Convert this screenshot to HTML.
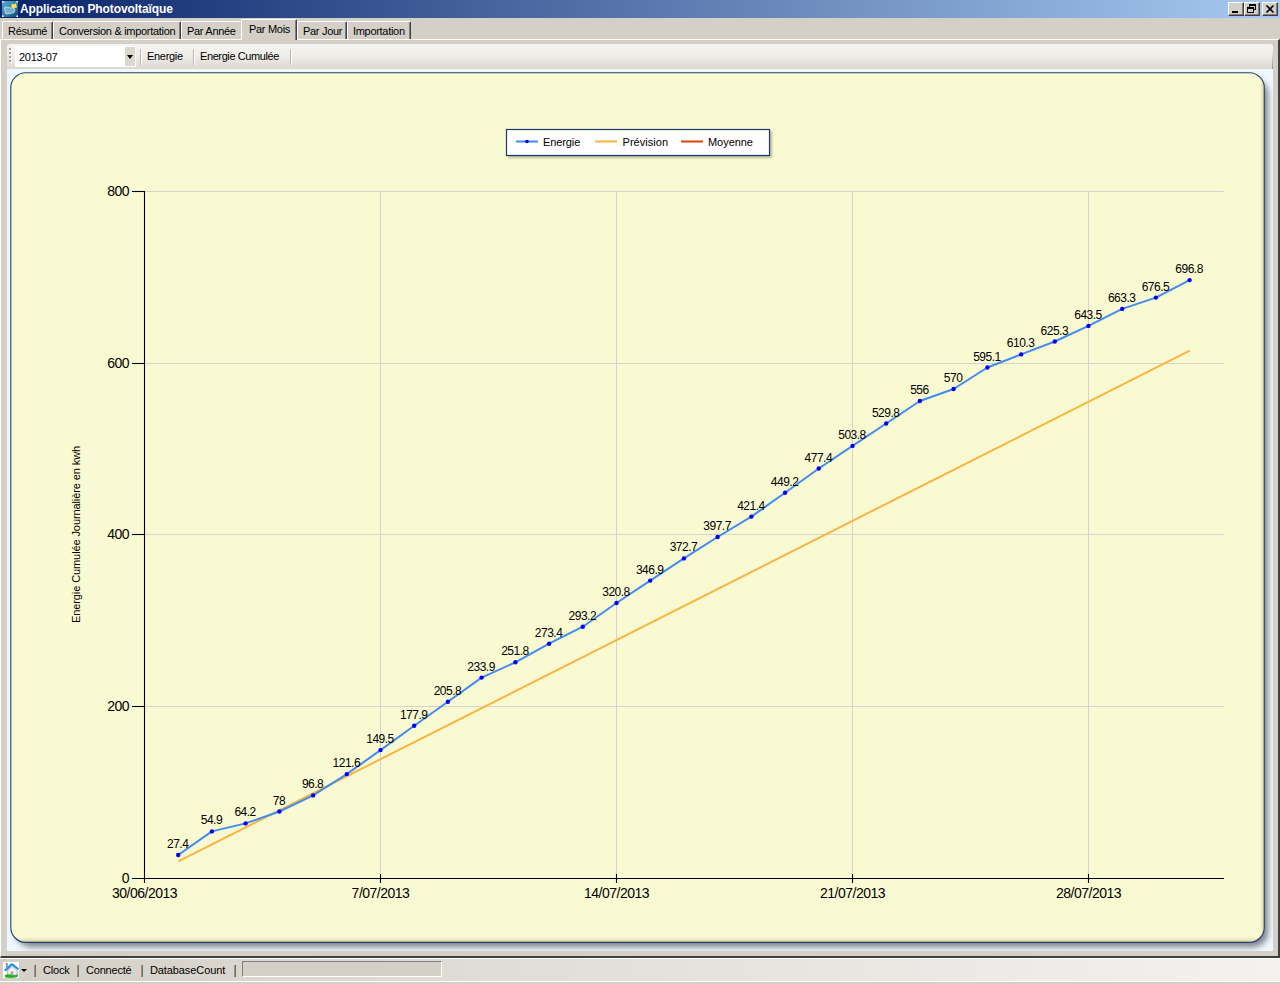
<!DOCTYPE html>
<html><head><meta charset="utf-8">
<style>
*{margin:0;padding:0;box-sizing:border-box}
html,body{width:1280px;height:984px;overflow:hidden;background:#d4d0c8;font-family:"Liberation Sans", sans-serif;font-size:11px;color:#000}
.abs{position:absolute}
#title{left:0;top:0;width:1280px;height:18px;background:linear-gradient(to right,#0a246a 0%,#a6caf0 100%)}
#title .t{position:absolute;left:20px;top:2px;color:#fff;font:bold 12px "Liberation Sans", sans-serif;letter-spacing:-0.1px}
.wbtn{position:absolute;top:2px;width:16px;height:14px;background:#d4d0c8;border-top:1px solid #fff;border-left:1px solid #fff;border-right:1px solid #404040;border-bottom:1px solid #404040;box-shadow:inset -1px -1px 0 #808080}
.tab{position:absolute;top:21px;height:18px;border-top:1px solid #fff;border-left:1px solid #fff;border-right:1px solid #404040;box-shadow:inset -1px 0 0 #808080;border-radius:2px 2px 0 0;padding-left:5px;line-height:19px;white-space:nowrap;letter-spacing:-0.3px}
.tab.sel{top:19px;height:21px;background:#d4d0c8;z-index:3;line-height:19px}
#page{left:0;top:39px;width:1280px;height:919px;border-top:1px solid #fff;border-left:1px solid #fff;border-right:2px solid #404040;border-bottom:2px solid #404040}
#toolbar{left:7px;top:44px;width:1266px;height:25px;border-radius:3px 3px 0 0;background:linear-gradient(to bottom,#f6f5f3 0%,#eeece8 50%,#dcd8d0 100%);}
#combo{left:15px;top:46px;width:121px;height:21px;background:#fff}
#combo .t{position:absolute;left:4px;top:5px;letter-spacing:-0.3px}
#combo .b{position:absolute;right:1px;top:1px;width:10px;height:19px;background:#dcd8d0}
.tsep{position:absolute;top:5px;width:1px;height:16px;background:#b8b4ac;box-shadow:1px 0 0 #fff}
#status{left:0;top:958px;width:1280px;height:26px;background:linear-gradient(to right,#d4d0c8 0%,#f3f2ef 100%);border-top:1px solid #fff}
.sep{position:absolute;top:965px;width:2px;height:12px;background:linear-gradient(to right,#d08a30 0%,#d08a30 50%,#3a78b8 50%,#3a78b8 100%)}
.st{position:absolute;top:964px;letter-spacing:-0.2px}
</style></head><body>
<div id="title" class="abs">
  <svg class="abs" style="left:2px;top:1px" width="16" height="16" viewBox="0 0 16 16">
    <defs><linearGradient id="ig" x1="0" y1="0" x2="1" y2="1"><stop offset="0" stop-color="#5fb2cc"/><stop offset="0.5" stop-color="#2f82a8"/><stop offset="1" stop-color="#0d4670"/></linearGradient></defs>
    <rect x="0" y="0" width="16" height="16" fill="url(#ig)"/>
    <path d="M2.5 6.5 L6 6 L8 7 L11 6.5 L13 9 L12 11.5 L8 12.5 L4 13 L3 10 Z" fill="#6fb0d4" stroke="#d0dce4" stroke-width="0.9"/>
    <path d="M9 4.5 L10.5 2.5 L12 3.5 L14 2 L14.5 4.5 L15 6.5 L13 7 L11.5 8 L10.5 6.5 Z" fill="#f4e44a"/>
    <circle cx="0.8" cy="0.8" r="0.9" fill="#fff"/><circle cx="15.2" cy="0.8" r="0.9" fill="#fff"/><circle cx="0.8" cy="15.2" r="0.9" fill="#fff"/><circle cx="15.2" cy="15.2" r="0.9" fill="#fff"/>
  </svg>
  <div class="t">Application Photovoltaïque</div>
  <div class="wbtn" style="left:1228px"><div class="abs" style="left:3px;top:8px;width:6px;height:2px;background:#000"></div></div>
  <div class="wbtn" style="left:1244px">
    <div class="abs" style="left:4px;top:1px;width:7px;height:6px;border:1px solid #000;border-top-width:2px"></div>
    <div class="abs" style="left:2px;top:4px;width:7px;height:6px;border:1px solid #000;border-top-width:2px;background:#d4d0c8"></div>
  </div>
  <div class="wbtn" style="left:1262px"><svg class="abs" style="left:0;top:0" width="14" height="12"><path d="M3.5 2.5 L10.5 9.5 M10.5 2.5 L3.5 9.5" stroke="#000" stroke-width="1.7"/></svg></div>
</div>
<div class="tab" style="left:2px;width:51px">Résumé</div>
<div class="tab" style="left:53px;width:128px">Conversion &amp; importation</div>
<div class="tab" style="left:181px;width:60px;border-right:none;box-shadow:none">Par Année</div>
<div class="tab sel" style="left:241px;width:56px;padding-left:7px">Par Mois</div>
<div class="tab" style="left:297px;width:50px">Par Jour</div>
<div class="tab" style="left:347px;width:64px">Importation</div>
<div id="page" class="abs"></div>
<div id="toolbar" class="abs">
  <div class="abs" style="left:2px;top:4px;width:2px;height:2px;background:#a0a0a0;box-shadow:0 4px 0 #a0a0a0,0 8px 0 #a0a0a0,0 12px 0 #a0a0a0,1px 1px 0 #fff,1px 5px 0 #fff,1px 9px 0 #fff,1px 13px 0 #fff"></div>
  <div class="tsep" style="left:133px"></div>
  <div class="abs" style="left:140px;top:6px;letter-spacing:-0.3px">Energie</div>
  <div class="tsep" style="left:186px"></div>
  <div class="abs" style="left:193px;top:6px;letter-spacing:-0.4px">Energie Cumulée</div>
  <div class="tsep" style="left:283px"></div>
  <div class="abs" style="left:1265px;top:8px;width:1px;height:17px;background:linear-gradient(to bottom,rgba(150,146,138,0) 0%,#9c988f 100%)"></div>
</div>
<div id="combo" class="abs"><div class="t">2013-07</div><div class="b"><div class="abs" style="left:2px;top:8px;width:0;height:0;border-left:3.5px solid transparent;border-right:3.5px solid transparent;border-top:4px solid #000"></div></div></div>
<svg class="abs" style="left:0;top:0" width="1280" height="984" font-family='"Liberation Sans", sans-serif' fill="#000">
<defs>
<filter id="sh" x="-5%" y="-5%" width="110%" height="110%"><feGaussianBlur stdDeviation="3.2"/></filter>
<linearGradient id="embB" x1="0" y1="0" x2="0" y2="1"><stop offset="0" stop-color="#FAFAD2" stop-opacity="0"/><stop offset="1" stop-color="#a09868" stop-opacity="0.7"/></linearGradient>
<linearGradient id="embR" x1="0" y1="0" x2="1" y2="0"><stop offset="0" stop-color="#FAFAD2" stop-opacity="0"/><stop offset="1" stop-color="#a09868" stop-opacity="0.75"/></linearGradient>
<clipPath id="pc"><rect x="7" y="69" width="1266" height="882"/></clipPath><clipPath id="fc"><rect x="11" y="73" width="1253" height="869" rx="15" ry="15"/></clipPath>
<filter id="sh3" x="-10%" y="-50%" width="120%" height="200%"><feGaussianBlur stdDeviation="1"/></filter></defs>
<rect x="7" y="69" width="1266" height="882" fill="#F0F8FF"/>
<g clip-path="url(#pc)"><rect x="16" y="79" width="1252" height="868" rx="15" ry="15" fill="#7c8089" opacity="1" filter="url(#sh)"/></g>
<rect x="10.8" y="72.8" width="1253.5" height="869.6" rx="15" ry="15" fill="#FAFAD2"/>
<g clip-path="url(#fc)"><rect x="0" y="936" width="1280" height="7" fill="url(#embB)"/><rect x="1259" y="60" width="6" height="900" fill="url(#embR)"/></g>
<rect x="10.8" y="72.8" width="1253.5" height="869.6" rx="15" ry="15" fill="none" stroke="#24436f" stroke-width="1.1"/>
<rect x="508" y="131" width="264" height="27" fill="#000" opacity="0.25" filter="url(#sh3)"/>
<rect x="506.5" y="129.5" width="263" height="26" fill="#fff" stroke="#1A3B69" stroke-width="1.2"/>
<line x1="516" y1="141.5" x2="538" y2="141.5" stroke="#418CF0" stroke-width="2"/>
<circle cx="527" cy="141.5" r="1.8" fill="#0000FF"/>
<line x1="595" y1="141.5" x2="617" y2="141.5" stroke="#FCB441" stroke-width="2"/>
<line x1="681" y1="141.5" x2="703" y2="141.5" stroke="#E0400A" stroke-width="2"/>
<text x="543" y="146" font-size="11" letter-spacing="-0.1">Energie</text>
<text x="622.5" y="146" font-size="11" letter-spacing="0.05">Prévision</text>
<text x="708" y="146" font-size="11" letter-spacing="-0.05">Moyenne</text>
<line x1="380.5" y1="191" x2="380.5" y2="878" stroke="#d3d3d3" stroke-width="1"/>
<line x1="616.5" y1="191" x2="616.5" y2="878" stroke="#d3d3d3" stroke-width="1"/>
<line x1="852.5" y1="191" x2="852.5" y2="878" stroke="#d3d3d3" stroke-width="1"/>
<line x1="1088.5" y1="191" x2="1088.5" y2="878" stroke="#d3d3d3" stroke-width="1"/>
<line x1="144" y1="191.5" x2="1224" y2="191.5" stroke="#d3d3d3" stroke-width="1"/>
<line x1="144" y1="363.5" x2="1224" y2="363.5" stroke="#d3d3d3" stroke-width="1"/>
<line x1="144" y1="534.5" x2="1224" y2="534.5" stroke="#d3d3d3" stroke-width="1"/>
<line x1="144" y1="706.5" x2="1224" y2="706.5" stroke="#d3d3d3" stroke-width="1"/>
<line x1="144.5" y1="191" x2="144.5" y2="883" stroke="#000" stroke-width="1.1"/>
<line x1="132" y1="878.5" x2="1224" y2="878.5" stroke="#000" stroke-width="1.1"/>
<line x1="132" y1="191.5" x2="144" y2="191.5" stroke="#000" stroke-width="1.1"/>
<line x1="132" y1="363.5" x2="144" y2="363.5" stroke="#000" stroke-width="1.1"/>
<line x1="132" y1="534.5" x2="144" y2="534.5" stroke="#000" stroke-width="1.1"/>
<line x1="132" y1="706.5" x2="144" y2="706.5" stroke="#000" stroke-width="1.1"/>
<line x1="380.5" y1="874" x2="380.5" y2="883" stroke="#000" stroke-width="1.1"/>
<line x1="616.5" y1="874" x2="616.5" y2="883" stroke="#000" stroke-width="1.1"/>
<line x1="852.5" y1="874" x2="852.5" y2="883" stroke="#000" stroke-width="1.1"/>
<line x1="1088.5" y1="874" x2="1088.5" y2="883" stroke="#000" stroke-width="1.1"/>
<text x="129" y="196.0" text-anchor="end" font-size="14" letter-spacing="-0.5">800</text>
<text x="129" y="368.0" text-anchor="end" font-size="14" letter-spacing="-0.5">600</text>
<text x="129" y="539.0" text-anchor="end" font-size="14" letter-spacing="-0.5">400</text>
<text x="129" y="711.0" text-anchor="end" font-size="14" letter-spacing="-0.5">200</text>
<text x="129" y="883.0" text-anchor="end" font-size="14" letter-spacing="-0.5">0</text>
<text x="144.5" y="898" text-anchor="middle" font-size="14" letter-spacing="-0.5">30/06/2013</text>
<text x="380.5" y="898" text-anchor="middle" font-size="14" letter-spacing="-0.5">7/07/2013</text>
<text x="616.5" y="898" text-anchor="middle" font-size="14" letter-spacing="-0.5">14/07/2013</text>
<text x="852.5" y="898" text-anchor="middle" font-size="14" letter-spacing="-0.5">21/07/2013</text>
<text x="1088.5" y="898" text-anchor="middle" font-size="14" letter-spacing="-0.5">28/07/2013</text>
<text transform="translate(80,534.5) rotate(-90)" text-anchor="middle" font-size="11" letter-spacing="-0.1">Energie Cumulée Journalière en kwh</text>
<line x1="178.3" y1="861.3" x2="1189.7" y2="350.6" stroke="#FCB441" stroke-width="2"/>
<polyline points="178.2,855.0 211.9,831.4 245.6,823.4 279.4,811.5 313.1,795.4 346.8,774.1 380.5,750.1 414.2,725.7 447.9,701.8 481.6,677.6 515.4,662.3 549.1,643.7 582.8,626.7 616.5,603.0 650.2,580.6 683.9,558.4 717.6,537.0 751.4,516.6 785.1,492.7 818.8,468.5 852.5,445.9 886.2,423.5 919.9,401.0 953.6,389.0 987.4,367.5 1021.1,354.4 1054.8,341.5 1088.5,325.9 1122.2,308.9 1155.9,297.6 1189.6,280.1" fill="none" stroke="#418CF0" stroke-width="2" stroke-linejoin="round"/>
<circle cx="178.2" cy="855.0" r="2.2" fill="#0000FF"/>
<circle cx="211.9" cy="831.4" r="2.2" fill="#0000FF"/>
<circle cx="245.6" cy="823.4" r="2.2" fill="#0000FF"/>
<circle cx="279.4" cy="811.5" r="2.2" fill="#0000FF"/>
<circle cx="313.1" cy="795.4" r="2.2" fill="#0000FF"/>
<circle cx="346.8" cy="774.1" r="2.2" fill="#0000FF"/>
<circle cx="380.5" cy="750.1" r="2.2" fill="#0000FF"/>
<circle cx="414.2" cy="725.7" r="2.2" fill="#0000FF"/>
<circle cx="447.9" cy="701.8" r="2.2" fill="#0000FF"/>
<circle cx="481.6" cy="677.6" r="2.2" fill="#0000FF"/>
<circle cx="515.4" cy="662.3" r="2.2" fill="#0000FF"/>
<circle cx="549.1" cy="643.7" r="2.2" fill="#0000FF"/>
<circle cx="582.8" cy="626.7" r="2.2" fill="#0000FF"/>
<circle cx="616.5" cy="603.0" r="2.2" fill="#0000FF"/>
<circle cx="650.2" cy="580.6" r="2.2" fill="#0000FF"/>
<circle cx="683.9" cy="558.4" r="2.2" fill="#0000FF"/>
<circle cx="717.6" cy="537.0" r="2.2" fill="#0000FF"/>
<circle cx="751.4" cy="516.6" r="2.2" fill="#0000FF"/>
<circle cx="785.1" cy="492.7" r="2.2" fill="#0000FF"/>
<circle cx="818.8" cy="468.5" r="2.2" fill="#0000FF"/>
<circle cx="852.5" cy="445.9" r="2.2" fill="#0000FF"/>
<circle cx="886.2" cy="423.5" r="2.2" fill="#0000FF"/>
<circle cx="919.9" cy="401.0" r="2.2" fill="#0000FF"/>
<circle cx="953.6" cy="389.0" r="2.2" fill="#0000FF"/>
<circle cx="987.4" cy="367.5" r="2.2" fill="#0000FF"/>
<circle cx="1021.1" cy="354.4" r="2.2" fill="#0000FF"/>
<circle cx="1054.8" cy="341.5" r="2.2" fill="#0000FF"/>
<circle cx="1088.5" cy="325.9" r="2.2" fill="#0000FF"/>
<circle cx="1122.2" cy="308.9" r="2.2" fill="#0000FF"/>
<circle cx="1155.9" cy="297.6" r="2.2" fill="#0000FF"/>
<circle cx="1189.6" cy="280.1" r="2.2" fill="#0000FF"/>
<text x="177.7" y="848.0" text-anchor="middle" font-size="12" letter-spacing="-0.5">27.4</text>
<text x="211.4" y="824.4" text-anchor="middle" font-size="12" letter-spacing="-0.5">54.9</text>
<text x="245.1" y="816.4" text-anchor="middle" font-size="12" letter-spacing="-0.5">64.2</text>
<text x="278.9" y="804.5" text-anchor="middle" font-size="12" letter-spacing="-0.5">78</text>
<text x="312.6" y="788.4" text-anchor="middle" font-size="12" letter-spacing="-0.5">96.8</text>
<text x="346.3" y="767.1" text-anchor="middle" font-size="12" letter-spacing="-0.5">121.6</text>
<text x="380.0" y="743.1" text-anchor="middle" font-size="12" letter-spacing="-0.5">149.5</text>
<text x="413.7" y="718.7" text-anchor="middle" font-size="12" letter-spacing="-0.5">177.9</text>
<text x="447.4" y="694.8" text-anchor="middle" font-size="12" letter-spacing="-0.5">205.8</text>
<text x="481.1" y="670.6" text-anchor="middle" font-size="12" letter-spacing="-0.5">233.9</text>
<text x="514.9" y="655.3" text-anchor="middle" font-size="12" letter-spacing="-0.5">251.8</text>
<text x="548.6" y="636.7" text-anchor="middle" font-size="12" letter-spacing="-0.5">273.4</text>
<text x="582.3" y="619.7" text-anchor="middle" font-size="12" letter-spacing="-0.5">293.2</text>
<text x="616.0" y="596.0" text-anchor="middle" font-size="12" letter-spacing="-0.5">320.8</text>
<text x="649.7" y="573.6" text-anchor="middle" font-size="12" letter-spacing="-0.5">346.9</text>
<text x="683.4" y="551.4" text-anchor="middle" font-size="12" letter-spacing="-0.5">372.7</text>
<text x="717.1" y="530.0" text-anchor="middle" font-size="12" letter-spacing="-0.5">397.7</text>
<text x="750.9" y="509.6" text-anchor="middle" font-size="12" letter-spacing="-0.5">421.4</text>
<text x="784.6" y="485.7" text-anchor="middle" font-size="12" letter-spacing="-0.5">449.2</text>
<text x="818.3" y="461.5" text-anchor="middle" font-size="12" letter-spacing="-0.5">477.4</text>
<text x="852.0" y="438.9" text-anchor="middle" font-size="12" letter-spacing="-0.5">503.8</text>
<text x="885.7" y="416.5" text-anchor="middle" font-size="12" letter-spacing="-0.5">529.8</text>
<text x="919.4" y="394.0" text-anchor="middle" font-size="12" letter-spacing="-0.5">556</text>
<text x="953.1" y="382.0" text-anchor="middle" font-size="12" letter-spacing="-0.5">570</text>
<text x="986.9" y="360.5" text-anchor="middle" font-size="12" letter-spacing="-0.5">595.1</text>
<text x="1020.6" y="347.4" text-anchor="middle" font-size="12" letter-spacing="-0.5">610.3</text>
<text x="1054.3" y="334.5" text-anchor="middle" font-size="12" letter-spacing="-0.5">625.3</text>
<text x="1088.0" y="318.9" text-anchor="middle" font-size="12" letter-spacing="-0.5">643.5</text>
<text x="1121.7" y="301.9" text-anchor="middle" font-size="12" letter-spacing="-0.5">663.3</text>
<text x="1155.4" y="290.6" text-anchor="middle" font-size="12" letter-spacing="-0.5">676.5</text>
<text x="1189.1" y="273.1" text-anchor="middle" font-size="12" letter-spacing="-0.5">696.8</text>
</svg>
<div id="status" class="abs"></div>
<svg class="abs" style="left:3px;top:962px" width="16" height="16" viewBox="0 0 17 17">
  <rect width="17" height="17" fill="#fff"/>
  <rect x="3" y="1" width="2" height="5" fill="#8c8c8c"/>
  <path d="M5 9 L10 4.5 L15 9 L15 14 L5 14 Z" fill="#f2f2f2" stroke="#9a9a9a" stroke-width="0.8"/>
  <path d="M8 10 L11 10 L11 14 L8 14 Z" fill="#a8a8a8"/>
  <path d="M1 8.5 L8 1.5 L10.5 1.5 L17 7 L15.8 8.6 L9.5 3.6 L3 10 Z" fill="#1a8cf0"/>
  <path d="M2 8.3 L8 2.5" stroke="#fff" stroke-width="0.6" stroke-dasharray="1 1"/>
  <path d="M1.5 14.5 Q4 12 8 13.5 Q12 15 16 13 L15.5 16 Q9 17.5 2.5 16.5 Z" fill="#22b322"/>
</svg>
<div class="abs" style="left:21px;top:969px;width:0;height:0;border-left:3px solid transparent;border-right:3px solid transparent;border-top:3px solid #000"></div>
<div class="sep" style="left:34px"></div>
<div class="st" style="left:43px">Clock</div>
<div class="sep" style="left:77px"></div>
<div class="st" style="left:86px">Connecté</div>
<div class="sep" style="left:141px"></div>
<div class="st" style="left:150px;letter-spacing:-0.1px">DatabaseCount</div>
<div class="sep" style="left:234px"></div>
<div class="abs" style="left:242px;top:961px;width:200px;height:16px;background:#d4d0c8;border-top:1px solid #808080;border-left:1px solid #808080;border-right:1px solid #fff;border-bottom:1px solid #fff"></div>
<div class="abs" style="left:0;top:981px;width:1280px;height:1px;background:#fff"></div>
<div class="abs" style="left:0;top:982px;width:1280px;height:2px;background:#d4d0c8"></div>
</body></html>
